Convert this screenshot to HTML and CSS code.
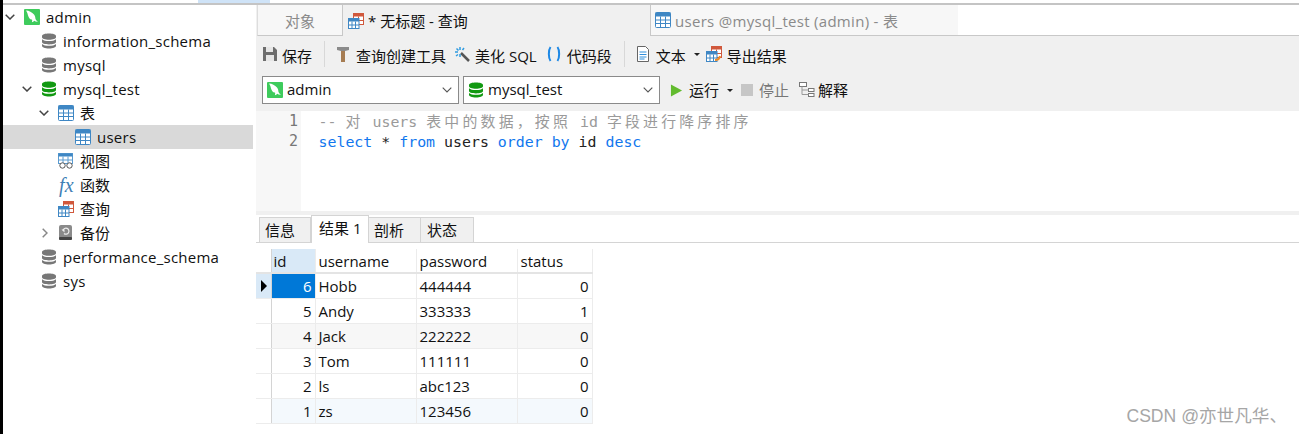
FILE: index.html
```html
<!DOCTYPE html>
<html lang="zh">
<head>
<meta charset="utf-8">
<title>Navicat</title>
<link rel="stylesheet" href="styles.css">
</head>
<body>
<svg class="defs" width="0" height="0" aria-hidden="true">
  <symbol id="dolphin" viewBox="0 0 16 16">
    <rect width="16" height="16" rx="1" fill="#3ecb5c"/>
    <path d="M2 1.500c3 .2 6 1.600 8 4 1 1.300 1.300 2.600 1.400 4 .1 1 1 2 2.600 3.300-1.500.1-2.800-.2-3.800-1-.5.7-1.300 1.200-2.300 1.400.4-.8.400-1.700.1-2.600-1-.1-2.100-.6-2.800-1.600C4 6.700 3.700 5.500 3.500 4.500 3.200 3.500 2.600 2.500 2 1.500z" fill="#fff"/>
  </symbol>
  <symbol id="db" viewBox="0 0 16 16">
    <path d="M1 3c0-1.600 3-2.500 7-2.500s7 .9 7 2.500v1.300c0 1.500-3 2.500-7 2.500S1 5.800 1 4.300zM1 6.200C2.300 7.500 5 8 8 8s5.700-.5 7-1.800v2.900c0 1.500-3 2.400-7 2.400s-7-.9-7-2.400zM1 11c1.300 1.300 4 1.800 7 1.800s5.700-.5 7-1.800v1.800c0 1.700-3 2.700-7 2.700s-7-1-7-2.700z"/>
  </symbol>
  <symbol id="table" viewBox="0 0 16 16">
    <rect x=".5" y=".5" width="15" height="15" rx="1" fill="#fff" stroke="#3f87c4"/>
    <rect x=".5" y=".5" width="15" height="4" fill="#3f87c4"/>
    <path d="M5.500 4.500v11M10.500 4.500v11M.5 8h15M.5 11.500h15" stroke="#3f87c4" fill="none"/>
  </symbol>
  <symbol id="view" viewBox="0 0 16 16">
    <rect x=".5" y=".5" width="14" height="10" fill="#fff" stroke="#5b9bd0"/>
    <rect x=".5" y=".5" width="14" height="3" fill="#3f87c4"/>
    <path d="M5 3.500v7M10 3.500v7M.5 7h14" stroke="#5b9bd0" fill="none"/>
    <circle cx="4.500" cy="12.500" r="2.700" fill="#fff" stroke="#555"/>
    <circle cx="11.500" cy="12.500" r="2.700" fill="#fff" stroke="#555"/>
  </symbol>
  <symbol id="query" viewBox="0 0 16 16">
    <rect x="5.500" y=".5" width="10" height="11" fill="#fff" stroke="#d0583c"/>
    <rect x="5.500" y=".5" width="10" height="3" fill="#d0583c"/>
    <path d="M10.500 3.500v8M5.500 7.500h10" stroke="#d0583c" fill="none"/>
    <rect x=".5" y="5.500" width="10.500" height="10" fill="#fff" stroke="#3f87c4"/>
    <rect x=".5" y="5.500" width="10.500" height="3" fill="#3f87c4"/>
    <path d="M4 8.500v7M7.500 8.500v7M.5 12h10.500" stroke="#3f87c4" fill="none"/>
  </symbol>
  <symbol id="backup" viewBox="0 0 16 16">
    <rect x="1" y="0" width="13" height="15" rx="2" fill="#8a8a8a"/>
    <rect x="1" y="12" width="13" height="3" rx="1" fill="#444"/>
    <path d="M5 5.500a3 3 0 1 1 1 3" fill="none" stroke="#eee" stroke-width="1.200"/>
    <path d="M3.500 4.500h3v3z" fill="#eee"/>
  </symbol>
</svg>

<aside class="sidebar">
  <div class="row l0"><svg class="chev" viewBox="0 0 10 6"><path d="M.7.7 5 5 9.300.7"/></svg><svg class="ico"><use href="#dolphin"/></svg><span>admin</span></div>
  <div class="row l1"><i class="slot"></i><svg class="ico grey"><use href="#db"/></svg><span>information_schema</span></div>
  <div class="row l1"><i class="slot"></i><svg class="ico grey"><use href="#db"/></svg><span>mysql</span></div>
  <div class="row l1"><svg class="chev" viewBox="0 0 10 6"><path d="M.7.7 5 5 9.300.7"/></svg><svg class="ico green"><use href="#db"/></svg><span>mysql_test</span></div>
  <div class="row l2"><svg class="chev" viewBox="0 0 10 6"><path d="M.7.7 5 5 9.300.7"/></svg><svg class="ico"><use href="#table"/></svg><span class="zh">表</span></div>
  <div class="row l3 sel"><i class="slot"></i><svg class="ico"><use href="#table"/></svg><span>users</span></div>
  <div class="row l2"><i class="slot"></i><svg class="ico"><use href="#view"/></svg><span class="zh">视图</span></div>
  <div class="row l2"><i class="slot"></i><em class="fx">fx</em><span class="zh">函数</span></div>
  <div class="row l2"><i class="slot"></i><svg class="ico"><use href="#query"/></svg><span class="zh">查询</span></div>
  <div class="row l2"><svg class="chev right" viewBox="0 0 6 10"><path d="M.7.7 5 5 .7 9.300"/></svg><svg class="ico"><use href="#backup"/></svg><span class="zh">备份</span></div>
  <div class="row l1"><i class="slot"></i><svg class="ico grey"><use href="#db"/></svg><span>performance_schema</span></div>
  <div class="row l1"><i class="slot"></i><svg class="ico grey"><use href="#db"/></svg><span>sys</span></div>
</aside>

<main class="main">
  <div class="tabs">
    <div class="tab objects">对象</div>
    <div class="tab active"><svg class="ico"><use href="#query"/></svg><span>* 无标题 - 查询</span></div>
    <div class="tab inactive"><svg class="ico"><use href="#table"/></svg><span>users @mysql_test (admin) - 表</span></div>
  </div>

  <div class="toolbar">
    <div class="tool save">
      <svg class="tico" viewBox="0 0 16 16"><path d="M1 1h11l3 3v11H1z" fill="#6d6d6d"/><rect x="4" y="1" width="7" height="5" fill="#e6e6e6"/><rect x="4" y="9" width="8" height="6" fill="#e6e6e6"/></svg>
      <span>保存</span>
    </div>
    <b class="sep"></b>
    <div class="tool">
      <svg class="tico" viewBox="0 0 16 16"><path d="M2 1h12v3l-4 1H6L2 4z" fill="#8b8b8b"/><rect x="6" y="5" width="4" height="11" fill="#a67c52"/></svg>
      <span>查询创建工具</span>
    </div>
    <div class="tool">
      <svg class="tico" viewBox="0 0 16 16"><path d="m7 7 8 8" stroke="#555" stroke-width="2.500"/><path d="M6 1v3M1 6h3M2.500 2.500l2 2M10 2 8.500 4M2 10l2-1.500M6 8v3" stroke="#2f9be0" stroke-width="1.500" fill="none"/></svg>
      <span>美化 SQL</span>
    </div>
    <div class="tool snip">
      <svg class="tico" viewBox="0 0 16 16"><path d="M4.500 1C2.300 4 2.300 12 4.500 15M11.500 1c2.200 3 2.200 11 0 14" fill="none" stroke="#1e88e5" stroke-width="2"/></svg>
      <span>代码段</span>
    </div>
    <b class="sep sep2"></b>
    <div class="tool">
      <svg class="tico" viewBox="0 0 16 16"><path d="M2.500.5h8l3 3v12h-11z" fill="#fff" stroke="#666"/><path d="M4.500 6h7M4.500 8.500h7M4.500 11h7M4.500 13h5" stroke="#2f8fdc"/></svg>
      <span>文本</span><i class="caret"></i>
    </div>
    <div class="tool export">
      <svg class="tico" viewBox="0 0 16 16"><use href="#query"/><path d="M9 14c3 0 4.500-1 5-4" fill="none" stroke="#f08a24" stroke-width="2"/></svg>
      <span>导出结果</span>
    </div>
  </div>

  <div class="runbar">
    <div class="select conn"><svg class="ico"><use href="#dolphin"/></svg><span>admin</span><svg class="sel-arrow" viewBox="0 0 10 6"><path d="M.7.7 5 5 9.300.7"/></svg></div>
    <div class="select dbsel"><svg class="ico green"><use href="#db"/></svg><span>mysql_test</span><svg class="sel-arrow" viewBox="0 0 10 6"><path d="M.7.7 5 5 9.300.7"/></svg></div>
    <div class="tool run">
      <svg class="tico" viewBox="0 0 14 14"><path d="M1 .5 13 7 1 13.500z" fill="#62bb2e"/></svg>
      <span>运行</span><i class="caret"></i>
    </div>
    <div class="tool stop"><i class="square"></i><span>停止</span></div>
    <div class="tool explain">
      <svg class="tico" viewBox="0 0 16 16"><g fill="#fff" stroke="#777"><rect x=".5" y=".5" width="7" height="4"/><rect x="9.500" y="6.500" width="5.500" height="3"/><rect x="9.500" y="11.500" width="5.500" height="3"/></g><path d="M3 4.500v8h6.500M3 8h6.500" fill="none" stroke="#999"/></svg>
      <span>解释</span>
    </div>
  </div>

  <div class="editor">
    <div class="gutter"><div>1</div><div>2</div></div>
    <pre class="code"><span class="cm">-- <span class="cj">对</span> users <span class="cj">表中的数据，按照</span> id <span class="cj">字段进行降序排序</span></span>
<span class="kw">select</span> * <span class="kw">from</span> users <span class="kw">order by</span> id <span class="kw">desc</span></pre>
  </div>

  <div class="split"></div>

  <div class="rtabs">
    <div class="rtab info">信息</div>
    <div class="rtab cur">结果 1</div>
    <div class="rtab prof">剖析</div>
    <div class="rtab stat">状态</div>
  </div>

  <section class="results">
    <table class="grid">
      <thead>
        <tr><th class="ind"></th><th class="cid">id</th><th class="cu">username</th><th class="cp">password</th><th class="cs">status</th></tr>
      </thead>
      <tbody>
        <tr><td class="ind cur-ind"><i class="arrow"></i></td><td class="num active-cell">6</td><td>Hobb</td><td>444444</td><td class="num">0</td></tr>
        <tr><td class="ind"></td><td class="num">5</td><td>Andy</td><td>333333</td><td class="num">1</td></tr>
        <tr class="grey-row"><td class="ind"></td><td class="num">4</td><td>Jack</td><td>222222</td><td class="num">0</td></tr>
        <tr><td class="ind"></td><td class="num">3</td><td>Tom</td><td>111111</td><td class="num">0</td></tr>
        <tr><td class="ind"></td><td class="num">2</td><td>ls</td><td>abc123</td><td class="num">0</td></tr>
        <tr class="blue-row"><td class="ind"></td><td class="num">1</td><td>zs</td><td>123456</td><td class="num">0</td></tr>
      </tbody>
    </table>
  </section>
</main>
<div class="topline"></div>
<div class="watermark">CSDN @亦世凡华、</div>
</body>
</html>
```
FILE: styles.css
```css
* { box-sizing: border-box; }
html, body { height: 100%; }
body {
  margin: 0;
  height: 434px;
  overflow: hidden;
  display: flex;
  background: #fff;
  color: #111;
  font-family: "Open Sans", "Noto Sans CJK SC", sans-serif;
  font-size: 15px;
  border-left: 3px solid #000;
  padding-top: 5px;
  position: relative;
}
.defs { position: absolute; }
.topline {
  position: absolute; left: 0; right: 0; top: 3px; height: 2px;
  background: #c4c4c4;
}
.topline::before {
  content: ""; position: absolute; left: 195px; top: -3px; width: 72px; height: 3px;
  background: #cfe3f7;
}
.sidebar { width: 250px; flex: none; background: #fff; letter-spacing: .25px; }
.row { height: 24px; display: flex; align-items: center; white-space: nowrap; }
.row.l0 { padding-left: 2px; }
.row.l1 { padding-left: 19px; }
.row.l2 { padding-left: 36px; }
.row.l3 { padding-left: 53px; }
.row.sel { background: #d9d9d9; }
.slot { width: 19px; flex: none; }
.zh { margin-bottom: 2px; letter-spacing: 0; }
.chev { width: 10px; height: 6px; margin-right: 9px; flex: none; fill: none; stroke: #444; stroke-width: 1.500; }
.chev.right { width: 6px; height: 10px; margin-left: 3px; margin-right: 10px; stroke: #888; }
.ico { width: 16px; height: 16px; margin-right: 6px; flex: none; }
.grey { color: #777; fill: #777; }
.green { fill: #119911; }
.fx {
  width: 16px; flex: none; margin-left: 1px; margin-right: 5px;
  font-family: "Liberation Serif", serif; font-size: 20px; color: #3f7fb5; line-height: 1;
}

.main {
  flex: 1; min-width: 0; display: flex; flex-direction: column;
  margin-left: 3px; background: #f0f0f0;
}
.tabs { height: 31px; display: flex; background: #f0f0f0; flex: none; padding-left: 1px; }
.tab {
  display: flex; align-items: center; height: 31px; font-size: 15px;
  border-right: 1px solid #c8c8c8; border-bottom: 1px solid #c8c8c8;
}
.tab .ico { margin-right: 4px; }
.objects { width: 86px; justify-content: center; background: #f7f7f7; color: #8a8a8a; border-left: 1px solid #ddd; }
.active { width: 307px; padding-left: 5px; background: #f0f0f0; border-bottom: 0; border-right: 0; }
.inactive {
  width: 308px; padding-left: 4px; background: #f7f7f7; color: #8a8a8a; letter-spacing: .3px;
  border-left: 1px solid #c8c8c8; border-right: 0; border-bottom: 1px solid #c8c8c8;
}
.tabs::after { content: ""; flex: 1; background: #fff; border-bottom: 1px solid #c8c8c8; }

.toolbar { height: 36px; display: flex; align-items: center; padding-left: 6px; flex: none; }
.toolbar .tool span { margin-top: 2px; }
.tool { display: flex; align-items: center; white-space: nowrap; font-size: 15px; }
.tico { width: 16px; height: 16px; margin-right: 5px; flex: none; }
.save .tico { margin-right: 4px; }
.sep { width: 1px; height: 26px; background: #d8d8d8; margin: 0 10px 0 12px; }
.toolbar .tool + .tool { margin-left: 8px; }
.toolbar .tool + .snip { margin-left: 9px; }
.toolbar .tool + .export { margin-left: 6px; }
.caret {
  width: 0; height: 0; margin-left: 8px;
  border-left: 3px solid transparent; border-right: 3px solid transparent; border-top: 3px solid #222;
}

.runbar { height: 38px; display: flex; align-items: center; padding-left: 6px; padding-bottom: 2px; flex: none; }
.runbar span { margin-bottom: 2px; }
.select {
  height: 28px; display: flex; align-items: center; background: #fff; border: 1px solid #8a8a8a;
  padding-left: 4px; margin-right: 4px;
}
.select .ico { margin-right: 4px; }
.conn { width: 197px; }
.dbsel { width: 197px; margin-right: 10px; }
.sel-arrow { width: 10px; height: 6px; margin-left: auto; margin-right: 6px; fill: none; stroke: #555; stroke-width: 1.100; }
.run .tico { width: 13px; height: 13px; margin-right: 6px; }
.stop { color: #777; margin-left: 8px; }
.square { width: 12px; height: 12px; background: #c6c6c6; margin-right: 6px; }
.explain { margin-left: 10px; }
.explain .tico { margin-right: 3px; }

.editor { height: 100px; display: flex; background: #fff; flex: none; margin-top: 1px; }
.gutter {
  width: 45px; background: #f7f7f7; color: #777; text-align: right; padding: 0 3px 0 0;
  font: 15px/20px "DejaVu Sans Mono", monospace; flex: none;
}
.code {
  margin: 0; padding: 0 0 0 17.500px; font: 14.900px/20px "DejaVu Sans Mono", "Noto Sans CJK SC", monospace;
  color: #222;
}
.cm { color: #9a9a9a; }
.cj { font-family: "Noto Sans CJK SC", sans-serif; letter-spacing: 3.200px; }
.kw { color: #1177ee; }

.split { height: 4px; background: #f0f0f0; flex: none; }
.rtabs {
  height: 28px; display: flex; align-items: flex-end; background: #fff; padding-left: 3px; flex: none;
  border-bottom: 1px solid #d4d4d4;
}
.rtab {
  height: 25px; background: #f0f0f0; border: 1px solid #d4d4d4; border-bottom: 0; border-left: 0;
  font-size: 15px; display: flex; align-items: center; padding-bottom: 2px;
}
.info { width: 52px; border-left: 1px solid #d4d4d4; padding-left: 5px; }
.cur { width: 58px; height: 28px; background: #fff; position: relative; top: 1px; border-left: 1px solid #d4d4d4; padding-left: 7px; padding-bottom: 5px; }
.prof { width: 52px; padding-left: 5px; }
.stat { width: 53px; padding-left: 6px; }

.results { flex: 1; background: #fff; padding-top: 6px; min-height: 0; }
.grid { border-collapse: collapse; table-layout: fixed; width: 336px; font-size: 15px; }
.grid th, .grid td {
  height: 25px; padding: 0 3px; border: 1px solid #ececec; border-top: 0; border-left: 0;
  font-weight: 400; text-align: left; white-space: nowrap; overflow: hidden;
}
.grid th { height: 24px; padding-top: 1px; border-bottom: 2px solid #e4e4e4; }
.ind { width: 15px; }
.cid { width: 44px; background: #d9e9f7; }
.grid .cid { padding-left: 2px; }
.cu { width: 101px; }
.cp { width: 101px; }
.cs { width: 75px; }
.grid .ind { border-right: 1px solid #d4d4d4; padding: 0; background: #fff; }
.grid .cur-ind { background: #d9e9f7; text-align: left; padding-left: 5px; }
.arrow {
  display: block; width: 0; height: 0;
  border-top: 6px solid transparent; border-bottom: 6px solid transparent; border-left: 6px solid #000;
}
.grid .num { text-align: right; }
.grid .active-cell { background: #0078d7; color: #fff; }
.grey-row td { background: #f7f7f7; }
.blue-row td { background: #f4f9fd; }

.watermark {
  position: absolute; right: 12px; bottom: 8px; font-size: 17.600px; color: #a6a6a6;
  font-family: "Liberation Sans", "Noto Sans CJK SC", sans-serif; line-height: 20px; white-space: nowrap;
}
```
